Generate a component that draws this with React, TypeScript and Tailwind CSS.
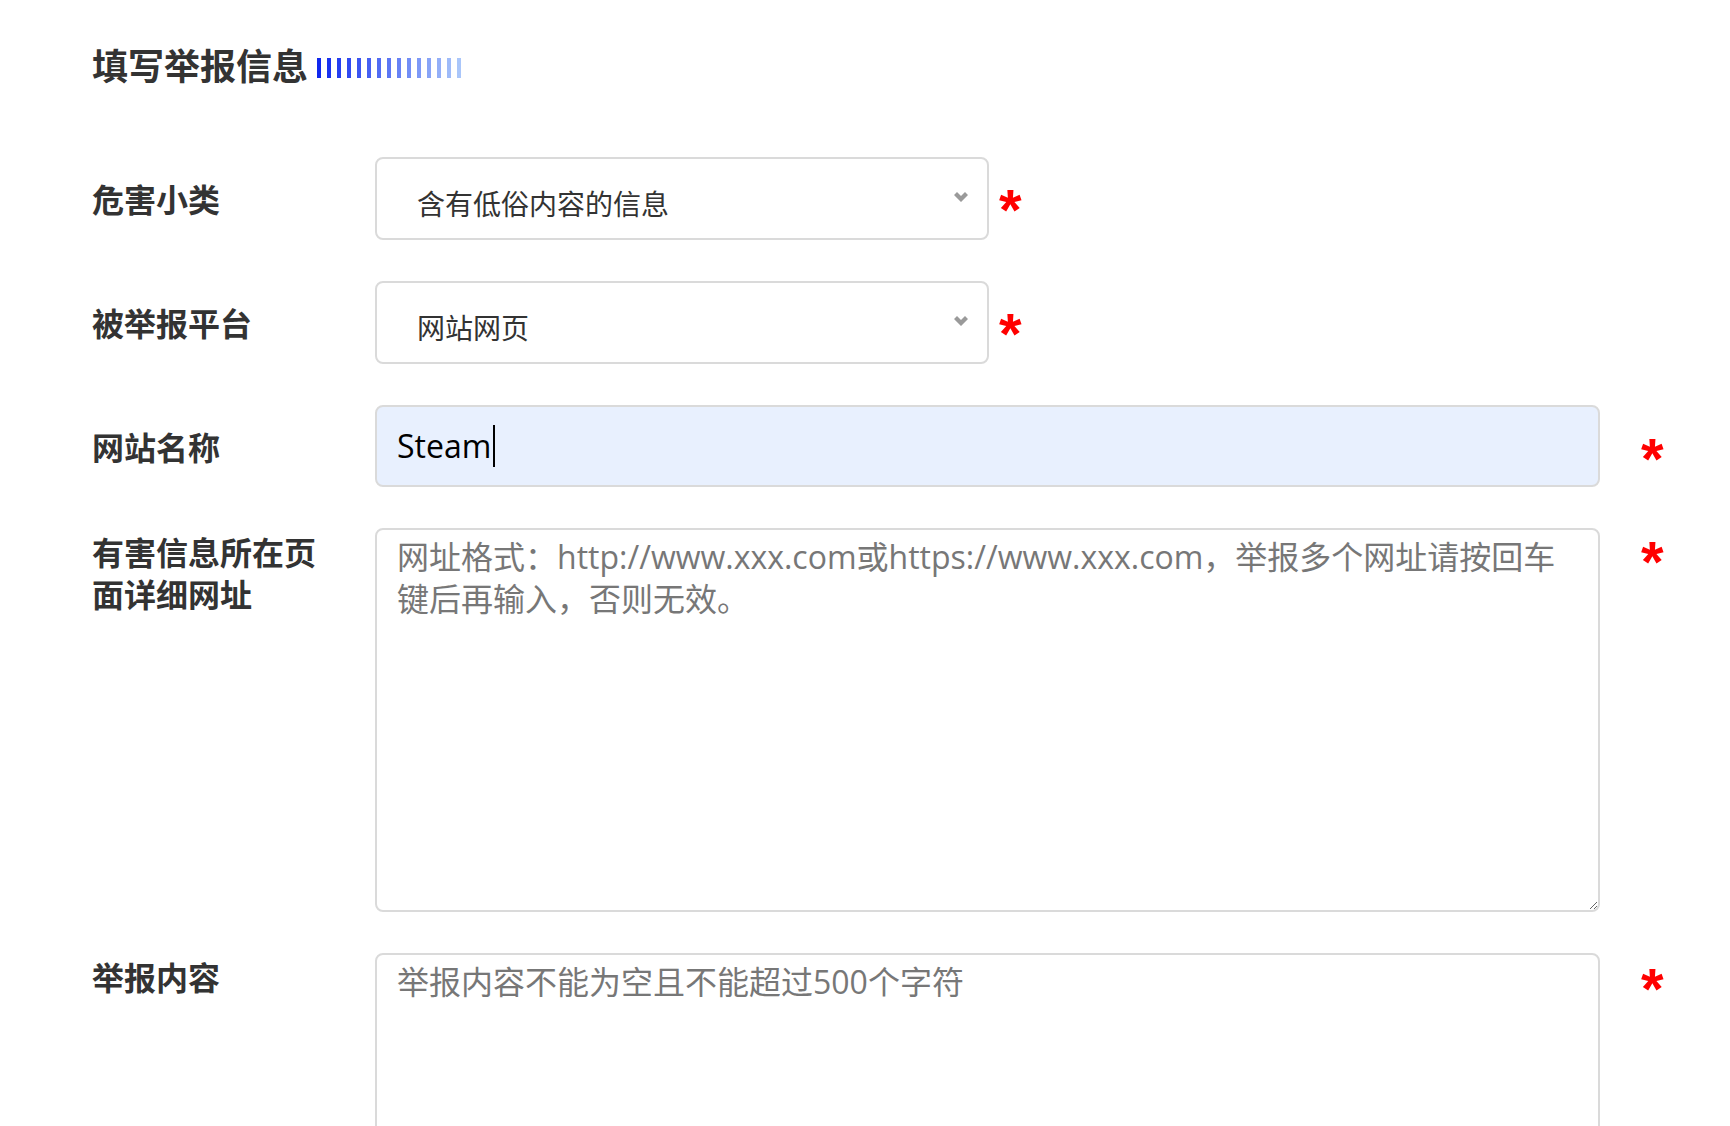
import React from "react";

const FONT = { fontFamily: '"Open Sans", "Noto Sans CJK SC", sans-serif' };

function Bars() {
  const n = 15;
  const from = [16, 40, 238];
  const to = [170, 198, 250];
  return (
    <svg width="146" height="20" viewBox="0 0 146 20" className="block">
      {Array.from({ length: n }).map((_, i) => {
        const t = i / (n - 1);
        const c = from.map((v, k) => Math.round(v + (to[k] - v) * t));
        return <rect key={i} x={i * 10} y={0} width={4} height={20} fill={`rgb(${c[0]},${c[1]},${c[2]})`} />;
      })}
    </svg>
  );
}

function Chevron() {
  return (
    <svg width="14" height="10" viewBox="0 0 14 10" className="absolute right-[19px] top-[33px]">
      <polygon points="0,3 3,0 7,4 11,0 14,3 7,10" fill="#9a9a9a" />
    </svg>
  );
}

function Star({ className }: { className: string }) {
  return (
    <span
      className={`block h-[40px] shrink-0 self-start text-[58px] leading-none font-bold text-[#ff0000] ${className}`}
      style={{ fontFamily: '"Liberation Sans", sans-serif' }}
    >
      *
    </span>
  );
}

function Label({ children, className }: { children: React.ReactNode; className: string }) {
  return (
    <div className={`w-[283px] shrink-0 text-[32px] leading-[42px] font-bold text-[#333] ${className}`}>{children}</div>
  );
}

function Select({ value }: { value: string }) {
  return (
    <div className="relative w-[614px] h-[83px] shrink-0 border-2 border-[#dadada] rounded-[8px] bg-white flex items-center pt-[10px] pl-[40px] text-[28px] text-[#333]">
      {value}
      <Chevron />
    </div>
  );
}

export default function App() {
  return (
    <div className="min-h-screen bg-white pl-[92px]" style={FONT}>
      <div className="pt-[42px] flex items-center">
        <h1 className="text-[36px] leading-[50px] font-bold text-[#333]">填写举报信息</h1>
        <div className="ml-[9px] mt-[2px]">
          <Bars />
        </div>
      </div>

      <div className="mt-[65px] flex flex-col gap-[41px]">
        <div className="flex">
          <Label className="pt-[22px]">危害小类</Label>
          <Select value="含有低俗内容的信息" />
          <Star className="ml-[10px] mt-[24px]" />
        </div>

        <div className="flex">
          <Label className="pt-[22px]">被举报平台</Label>
          <Select value="网站网页" />
          <Star className="ml-[10px] mt-[24px]" />
        </div>

        <div className="flex">
          <Label className="pt-[22px]">网站名称</Label>
          <div className="w-[1225px] h-[82px] shrink-0 border-2 border-[#dadada] rounded-[8px] bg-[#e8f0fe] flex items-center pl-[20px] text-[32px] text-black">
            <span>Steam</span>
            <span className="ml-[2px] w-[2px] h-[42px] bg-black" />
          </div>
          <Star className="ml-[41px] mt-[25px]" />
        </div>

        <div className="flex">
          <Label className="pt-[4px]">
            有害信息所在页
            <br />
            面详细网址
          </Label>
          <textarea
            className="w-[1225px] h-[384px] shrink-0 border-2 border-[#dadada] rounded-[8px] bg-white px-[20px] pt-[6px] text-[32px] leading-[42px] text-[#333] placeholder:text-[#777] outline-none"
            placeholder={"网址格式：http://www.xxx.com或https://www.xxx.com，举报多个网址请按回车\n键后再输入，否则无效。"}
          />
          <Star className="ml-[41px] mt-[5px]" />
        </div>

        <div className="flex">
          <Label className="pt-[4px]">举报内容</Label>
          <textarea
            className="w-[1225px] h-[384px] shrink-0 border-2 border-[#dadada] rounded-[8px] bg-white px-[20px] pt-[6px] text-[32px] leading-[42px] text-[#333] placeholder:text-[#777] outline-none"
            placeholder="举报内容不能为空且不能超过500个字符"
          />
          <Star className="ml-[41px] mt-[7px]" />
        </div>
      </div>
    </div>
  );
}
